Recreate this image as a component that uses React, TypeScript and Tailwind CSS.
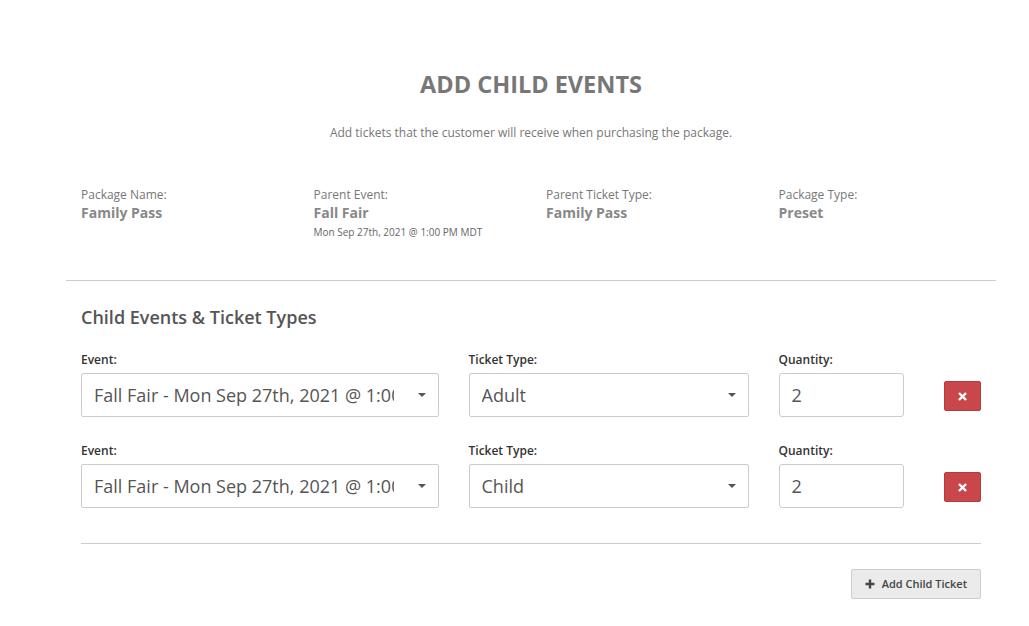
import React from "react";

const font = { fontFamily: '"Open Sans", "Liberation Sans", sans-serif' };

function Caret() {
  return <span className="absolute right-[12px] top-1/2 -translate-y-1/2 w-0 h-0 border-l-[4px] border-r-[4px] border-t-[4px] border-l-transparent border-r-transparent border-t-[#555]" />;
}

function SelectBox({ text }: { text: string }) {
  return (
    <div className="relative h-[44px] border border-[#ccc] rounded-[2px] bg-white flex items-center pl-[12px] pr-[44px] overflow-hidden">
      <span className="text-[18px] text-[#555] whitespace-nowrap overflow-hidden">{text}</span>
      <Caret />
    </div>
  );
}

function Row({ ticket }: { ticket: string }) {
  return (
    <div className="flex mx-[-15px]">
      <div className="w-[387.5px] px-[15px]">
        <div className="text-[12px] font-semibold text-[#333] leading-[17px] mb-[5px]">Event:</div>
        <SelectBox text="Fall Fair - Mon Sep 27th, 2021 @ 1:00 PM MDT" />
      </div>
      <div className="w-[310px] px-[15px]">
        <div className="text-[12px] font-semibold text-[#333] leading-[17px] mb-[5px]">Ticket Type:</div>
        <SelectBox text={ticket} />
      </div>
      <div className="w-[155px] px-[15px]">
        <div className="text-[12px] font-semibold text-[#333] leading-[17px] mb-[5px]">Quantity:</div>
        <div className="h-[44px] border border-[#ccc] rounded-[3px] bg-white flex items-center px-[12px]">
          <span className="text-[18px] text-[#555]">2</span>
        </div>
      </div>
      <div className="w-[77.5px] px-[15px] flex justify-end pt-[30px]">
        <button className="w-[37px] h-[30px] bg-[#c9474a] border border-[#b53b3e] rounded-[2px] flex items-center justify-center">
          <svg width="9" height="9" viewBox="0 0 10 10">
            <path d="M2 2 L8 8 M8 2 L2 8" stroke="white" strokeWidth="2.6" strokeLinecap="square" />
          </svg>
        </button>
      </div>
    </div>
  );
}

function Info({ label, value, sub }: { label: string; value: string; sub?: string }) {
  return (
    <div className="w-[232.5px] px-[15px]">
      <div className="text-[12px] text-[#777] leading-[17px]">{label}</div>
      <div className="text-[14px] font-bold text-[#888] leading-[20px]">{value}</div>
      {sub && <div className="text-[10px] text-[#666] leading-[14px] mt-[2px]">{sub}</div>}
    </div>
  );
}

export default function App() {
  return (
    <div className="w-[1029px] h-[626px] bg-white overflow-hidden" style={font}>
      <div className="w-[930px] ml-[66px]">
        <div className="pt-[68px] text-center">
          <h1 className="text-[23.5px] font-bold text-[#777] leading-[32px]">ADD CHILD EVENTS</h1>
          <p className="text-[12px] text-[#777] mt-[24px] leading-[17px]">Add tickets that the customer will receive when purchasing the package.</p>
        </div>
        <div className="flex mt-[45px]">
          <Info label="Package Name:" value="Family Pass" />
          <Info label="Parent Event:" value="Fall Fair" sub="Mon Sep 27th, 2021 @ 1:00 PM MDT" />
          <Info label="Parent Ticket Type:" value="Family Pass" />
          <Info label="Package Type:" value="Preset" />
        </div>
        <div className="border-t border-[#ccc] mt-[41px]" />
        <div className="px-[15px]">
          <h2 className="text-[18px] font-semibold text-[#555] leading-[24px] mt-[24px]">Child Events &amp; Ticket Types</h2>
          <div className="mt-[22px]">
            <Row ticket="Adult" />
          </div>
          <div className="mt-[25px]">
            <Row ticket="Child" />
          </div>
          <div className="border-t border-[#ccc] mt-[35px]" />
          <div className="flex justify-end mt-[25px]">
            <button className="h-[30px] px-[13px] bg-[#ebebeb] border border-[#ccc] rounded-[2px] flex items-center gap-[7px] text-[11px] font-semibold text-[#444]">
              <svg width="10" height="10" viewBox="0 0 10 10">
                <path d="M5 0.5 V9.5 M0.5 5 H9.5" stroke="#444" strokeWidth="2.4" />
              </svg>
              Add Child Ticket
            </button>
          </div>
        </div>
      </div>
    </div>
  );
}
